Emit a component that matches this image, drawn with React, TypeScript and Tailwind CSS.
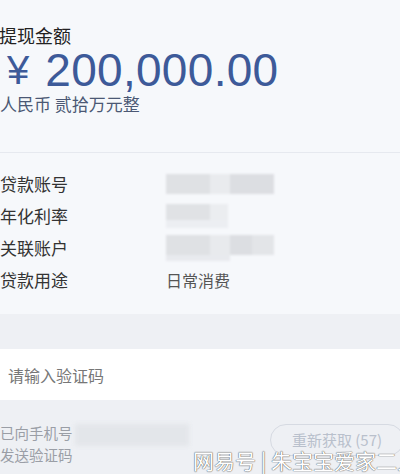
import React from 'react';

const font = { fontFamily: '"Noto Sans CJK SC", "Liberation Sans", sans-serif' };

function Row({ label, children }: { label: string; children: React.ReactNode }) {
  return (
    <div className="flex h-8 items-center">
      <span className="w-[166px] shrink-0 text-[17px] text-[#333]">{label}</span>
      {children}
    </div>
  );
}

export default function App() {
  return (
    <div className="relative w-[400px] h-[474px] overflow-hidden bg-[#eef0f4]" style={font}>
      <div className="bg-[#f6f8fb] pt-[23px]">
        <div className="-ml-[1px] text-[18px] leading-6 text-[#222]">提现金额</div>
        <div className="flex items-center h-[46px] pl-[7px] text-[#3d5a99]" style={{ fontFamily: '"Liberation Sans", sans-serif' }}>
          <span className="text-[40px] leading-none">¥</span>
          <span className="ml-[16px] text-[46px] leading-none tracking-[0.3px]">200,000.00</span>
        </div>
        <div className="text-[17px] leading-[22px] text-[#4b5874]">人民币 贰拾万元整</div>
        <div className="mt-[37px] border-t border-[#e6e9ef]" />
        <div className="pt-[15px] pb-[18px]">
          <Row label="贷款账号">
            <div className="flex h-[20px] w-[108px] blur-[1px]">
              <div className="w-[44px] bg-[#dfe1e4]" />
              <div className="w-[20px] bg-[#e9ebee]" />
              <div className="flex-1 bg-[#dcdee2]" />
            </div>
          </Row>
          <Row label="年化利率">
            <div className="flex flex-col blur-[1px]">
              <div className="flex h-[16px]">
                <div className="w-[44px] bg-[#e0e2e5]" />
                <div className="w-[18px] bg-[#ebedf0]" />
              </div>
              <div className="h-[8px] w-[62px] bg-[#eceef2]" />
            </div>
          </Row>
          <Row label="关联账户">
            <div className="flex flex-col blur-[1px]">
              <div className="flex h-[20px] w-[108px]">
                <div className="w-[44px] bg-[#dfe1e4]" />
                <div className="w-[20px] bg-[#e8eaed]" />
                <div className="w-[22px] bg-[#dcdee2]" />
                <div className="flex-1 bg-[#e3e5e8]" />
              </div>
              <div className="h-[6px] w-[64px] bg-[#e8eaee]" />
            </div>
          </Row>
          <Row label="贷款用途">
            <span className="text-[16px] text-[#555]">日常消费</span>
          </Row>
        </div>
      </div>
      <div className="mt-[35px] flex h-[51px] items-center bg-white pl-[8px] text-[16px] text-[#777]">
        请输入验证码
      </div>
      <div className="flex items-start justify-between pt-[22px]">
        <div className="flex items-center">
          <div className="text-[14.5px] leading-[22px] text-[#9a9ea6]">
            <div>已向手机号</div>
            <div>发送验证码</div>
          </div>
          <div className="ml-[2px] -mt-[18px] h-[22px] w-[114px] bg-[#e3e6ea] blur-[2px]" />
        </div>
        <div className="mt-[2px] mr-[-4px] flex h-[32px] w-[134px] items-center justify-center rounded-full border border-[#d6dae2] text-[15px] text-[#b9c0cc]">
          重新获取 (57)
        </div>
      </div>
      <div className="absolute left-[193px] top-[445px] whitespace-nowrap text-[21px] text-white [text-shadow:0_0_1px_#555,0_0_1px_#555]">
        网易号 | 朱宝宝爱家二人
      </div>
    </div>
  );
}
